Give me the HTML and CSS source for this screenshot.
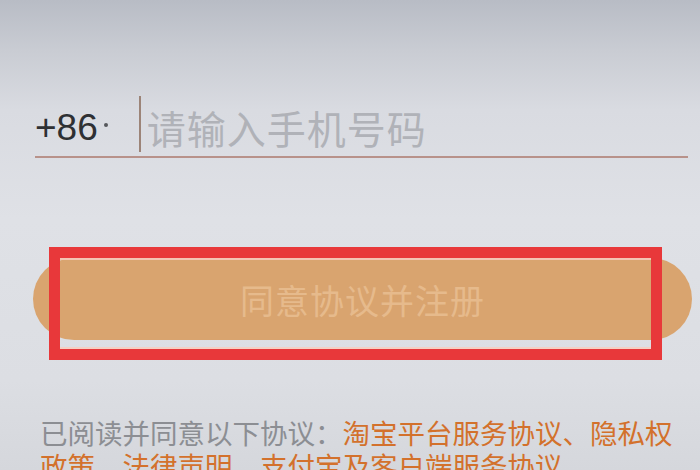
FILE: index.html
```html
<!DOCTYPE html>
<html lang="zh-CN">
<head>
<meta charset="utf-8">
<title>注册</title>
<link rel="stylesheet" href="styles.css">
</head>
<body>
<div class="screen">
  <div class="phone-row">
    <span class="code">+86</span>
    <span class="caret-dot"></span>
    <span class="cursor"></span>
    <span class="placeholder">请输入手机号码</span>
  </div>
  <div class="btn-wrap">
    <div class="btn">同意协议并注册</div>
    <div class="highlight"></div>
  </div>
  <p class="terms"><span class="muted">已阅读并同意以下协议：</span><span class="link">淘宝平台服务协议、隐私权政策、法律声明、支付宝及客户端服务协议</span></p>
</div>
</body>
</html>
```
FILE: styles.css
```css
html, body {
  margin: 0;
  padding: 0;
}
body {
  width: 700px;
  height: 470px;
  overflow: hidden;
  font-family: "Noto Sans CJK SC", "Noto Sans", "Liberation Sans", sans-serif;
}
.screen {
  height: 470px;
  box-sizing: border-box;
  padding-top: 96px;
  background: linear-gradient(180deg, #b8bcc5 0px, #c9ccd3 50px, #d9dbe1 110px, #dfe1e6 220px, #dcdee3 380px, #d5d7dc 470px);
}
.phone-row {
  display: flex;
  align-items: center;
  height: 60px;
  margin: 0 12px 0 35px;
  border-bottom: 2px solid #b8928a;
}
.code {
  font-family: "Liberation Sans", Arial, sans-serif;
  font-size: 37px;
  color: #2e3033;
  line-height: 1;
  margin-top: 2px;
}
.caret-dot {
  width: 4px;
  height: 4px;
  border-radius: 50%;
  background: #55575b;
  margin: 0 0 2px 6px;
}
.cursor {
  width: 2px;
  height: 56px;
  background: #9c8478;
  margin-left: 31px;
  align-self: flex-start;
}
.placeholder {
  font-size: 39px;
  color: #b0b2b8;
  margin-left: 6px;
  line-height: 1;
  letter-spacing: 1px;
  margin-top: 2px;
}
.btn-wrap {
  position: relative;
  margin: 100px 8px 0 33px;
}
.btn {
  height: 82px;
  border-radius: 41px;
  background: #d9a46f;
  color: #e6ba8c;
  font-size: 34px;
  display: flex;
  align-items: center;
  justify-content: center;
  letter-spacing: 1px;
}
.highlight {
  position: absolute;
  left: 16px;
  top: -11px;
  width: 613px;
  height: 113px;
  box-sizing: border-box;
  border: 11px solid #e8383a;
  box-shadow: inset 0 2px 0 #f4c4b4, inset 0 -2px 0 #f4d0c4;
}
.terms {
  margin: 76px 20px 0 40px;
  font-size: 27.5px;
  line-height: 33px;
}
.muted {
  color: #8c8e93;
}
.link {
  color: #d3712c;
}
```
